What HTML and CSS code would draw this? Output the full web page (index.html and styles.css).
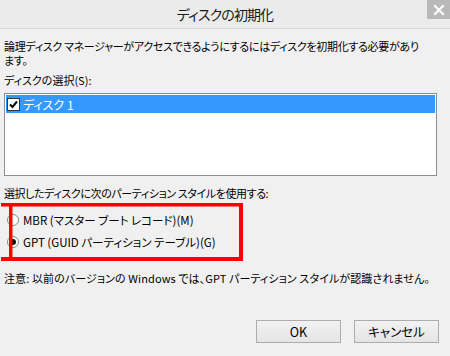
FILE: index.html
```html
<!DOCTYPE html>
<html lang="ja">
<head>
<meta charset="utf-8">
<title>ディスクの初期化</title>
<link rel="stylesheet" href="styles.css">
</head>
<body>
<div class="window">
  <div class="titlebar">
    <span class="spacer"></span>
    <span class="title">ディスクの初期化</span>
    <span class="close">
      <svg width="12" height="12" viewBox="0 0 12 12"><path d="M2 2 L10 10 M10 2 L2 10" stroke="#fff" stroke-width="2.2" stroke-linecap="square"/></svg>
    </span>
  </div>
  <div class="content">
    <p class="intro">論理ディスク マネージャーがアクセスできるようにするにはディスクを初期化する必要があります。</p>
    <div class="label">ディスクの選択(S):</div>
    <div class="listbox">
      <div class="row selected">
        <span class="checkbox">
          <svg width="9" height="9" viewBox="0 0 9 9"><path d="M1 4.5 L3.5 7 L8 1.5" fill="none" stroke="#000" stroke-width="2"/></svg>
        </span>
        <span class="rowtext">ディスク 1</span>
      </div>
    </div>
    <div class="label label2">選択したディスクに次のパーティション スタイルを使用する:</div>
    <div class="radios">
      <div class="radio-row"><span class="radio"></span><span>MBR (マスター ブート レコード)(M)</span></div>
      <div class="radio-row"><span class="radio checked"></span><span>GPT (GUID パーティション テーブル)(G)</span></div>
    </div>
    <div class="note">注意: 以前のバージョンの Windows では、GPT パーティション スタイルが認識されません。</div>
    <div class="buttons">
      <button class="btn">OK</button>
      <button class="btn">キャンセル</button>
    </div>
  </div>
  <svg class="annot" width="450" height="356" viewBox="0 0 450 356">
    <rect x="1" y="203" width="242" height="3.5" fill="#ff0000"/>
    <rect x="1" y="257" width="242" height="4" fill="#ff0000"/>
    <rect x="9" y="203" width="3.5" height="58" fill="#ff0000"/>
    <rect x="239" y="203" width="4" height="58" fill="#ff0000"/>
  </svg>
</div>
</body>
</html>
```

FILE: styles.css
```css
* { box-sizing: border-box; }
html, body {
  margin: 0;
  padding: 0;
  background: #f0f0f0;
}
.window {
  position: relative;
  width: 450px;
  height: 356px;
  overflow: hidden;
  background: #f0f0f0;
  font-family: "Noto Sans CJK JP", "Noto Sans", sans-serif;
  font-size: 11px;
  color: #000;
  font-feature-settings: "palt";
}
.titlebar {
  height: 29px;
  background: #ebebeb;
  border-bottom: 1px solid #d9d9d9;
  display: grid;
  grid-template-columns: 1fr auto 1fr;
}
.title {
  font-size: 14px;
  line-height: 28px;
  color: #1a1a1a;
  letter-spacing: -0.9px;
}
.close {
  justify-self: end;
  width: 23px;
  height: 19px;
  background: #b9b9b9;
  display: flex;
  align-items: center;
  justify-content: center;
}
.content {
  padding: 10px 0 0 4px;
}
.intro {
  margin: 0;
  width: 421px;
  line-height: 14px;
  letter-spacing: -0.3px;
}
.label {
  margin-top: 6px;
  line-height: 14px;
}
.listbox {
  margin-top: 6px;
  width: 433px;
  height: 83px;
  background: #fff;
  border: 1px solid #8b8f95;
  padding: 1px;
}
.row {
  height: 18px;
  display: flex;
  align-items: center;
  gap: 3px;
  padding-left: 1px;
}
.row.selected {
  background: #3399ff;
  color: #fff;
}
.checkbox {
  width: 13px;
  height: 13px;
  background: #fff;
  border: 1px solid #333;
  display: flex;
  align-items: center;
  justify-content: center;
}
.rowtext {
  font-size: 12px;
}
.label2 {
  margin-top: 10px;
  letter-spacing: -0.4px;
}
.radios {
  margin-top: 9px;
  display: flex;
  flex-direction: column;
  font-size: 11.5px;
}
.radio-row {
  height: 22px;
  display: flex;
  align-items: center;
  gap: 4px;
  padding-left: 3px;
}
.radio {
  width: 12px;
  height: 12px;
  border-radius: 50%;
  border: 1px solid #8a8a8a;
  background: #fff;
  position: relative;
}
.radio.checked::after {
  content: "";
  position: absolute;
  left: 2px;
  top: 2px;
  width: 6px;
  height: 6px;
  border-radius: 50%;
  background: #111;
}
.note {
  margin-top: 18px;
  line-height: 14px;
  letter-spacing: 0.1px;
}
.buttons {
  margin-top: 35px;
  display: flex;
  justify-content: flex-end;
  gap: 13px;
  padding-right: 11px;
}
.btn {
  width: 85px;
  height: 23px;
  border: 1px solid #adadad;
  background: linear-gradient(#f2f2f2, #e5e5e5);
  font-family: inherit;
  font-size: 12.5px;
  font-feature-settings: "palt";
  color: #000;
  padding: 0;
}
.annot {
  position: absolute;
  left: 0;
  top: 0;
  pointer-events: none;
}
```
